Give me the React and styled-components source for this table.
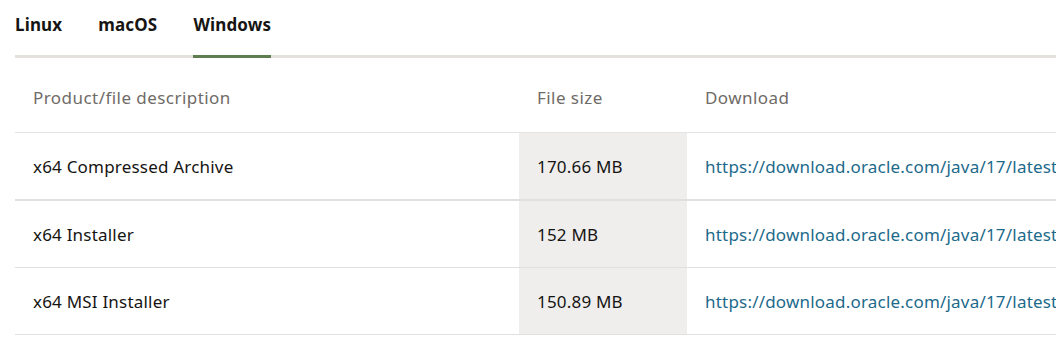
import React from "react";
import styled, { createGlobalStyle } from "styled-components";

const Global = createGlobalStyle`
  html, body { margin: 0; padding: 0; background: #fff; overflow: hidden; }
  body { font-family: "Noto Sans", "Open Sans", Arial, sans-serif; color: #161513; }
`;

const Page = styled.div`
  width: 1300px;
  padding-left: 15px;
`;

const TabList = styled.div`
  display: flex;
  gap: 36px;
  border-bottom: 3px solid #e4e1dc;
  height: 55px;
`;

const Tab = styled.div`
  font-size: 17px;
  font-weight: 700;
  line-height: 24px;
  padding-top: 13px;
  letter-spacing: 0.15px;
  color: #161513;
  margin-bottom: -3px;
  border-bottom: 3px solid ${(p) => (p.$active ? "#5f7e50" : "transparent")};
`;

const Table = styled.table`
  border-collapse: collapse;
  width: 1200px;
  table-layout: fixed;
`;

const HeadCell = styled.th`
  text-align: left;
  font-weight: 400;
  font-size: 17px;
  letter-spacing: 0.45px;
  color: #6f6b67;
  height: 70px;
  padding: 4px 0 0 18px;
  border-bottom: 1px solid #e4e4e4;
  width: ${(p) => p.$w || "auto"};
`;

const Row = styled.tr`
  border-bottom: ${(p) => p.$bw || 1}px solid #e0e0e0;
`;

const Cell = styled.td`
  font-size: 17px;
  letter-spacing: 0.2px;
  height: 66px;
  padding: 0 0 0 18px;
  color: #161513;
  background: ${(p) => (p.$shade ? "#efeeec" : "transparent")};
  white-space: nowrap;
  overflow: hidden;
`;

const Link = styled.a`
  color: #1d6a8b;
  text-decoration: none;
`;

const rows = [
  ["x64 Compressed Archive", "170.66 MB", "https://download.oracle.com/java/17/latest/jdk-17_windows-x64_bin.zip", 2],
  ["x64 Installer", "152 MB", "https://download.oracle.com/java/17/latest/jdk-17_windows-x64_bin.exe", 1],
  ["x64 MSI Installer", "150.89 MB", "https://download.oracle.com/java/17/latest/jdk-17_windows-x64_bin.msi", 1],
];

export default function App() {
  return (
    <>
      <Global />
      <Page>
        <TabList>
          <Tab>Linux</Tab>
          <Tab>macOS</Tab>
          <Tab $active>Windows</Tab>
        </TabList>
        <Table>
          <thead>
            <tr>
              <HeadCell $w="486px">Product/file description</HeadCell>
              <HeadCell $w="150px">File size</HeadCell>
              <HeadCell>Download</HeadCell>
            </tr>
          </thead>
          <tbody>
            {rows.map(([d, s, u, bw]) => (
              <Row key={d} $bw={bw}>
                <Cell>{d}</Cell>
                <Cell $shade>{s}</Cell>
                <Cell>
                  <Link href="#">{u}</Link>
                </Cell>
              </Row>
            ))}
          </tbody>
        </Table>
      </Page>
    </>
  );
}
